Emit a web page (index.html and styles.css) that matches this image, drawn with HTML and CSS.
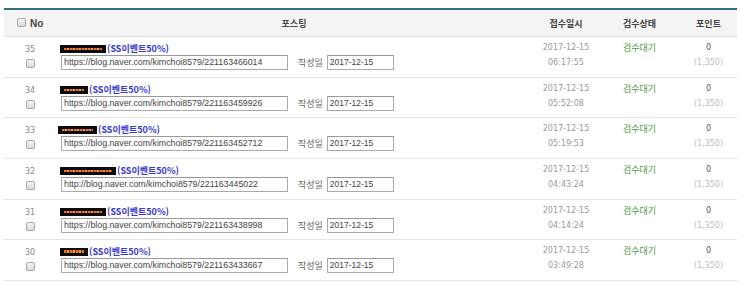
FILE: index.html
```html
<!DOCTYPE html>
<html lang="ko">
<head>
<meta charset="utf-8">
<link rel="stylesheet" href="styles.css">
</head>
<body>
<table class="list">
  <colgroup>
    <col class="c-no"><col class="c-post"><col class="c-date"><col class="c-state"><col class="c-point">
  </colgroup>
  <thead>
    <tr>
      <th class="h-no"><span class="chk chk-h"></span>No</th>
      <th>포스팅</th>
      <th>접수일시</th>
      <th>검수상태</th>
      <th>포인트</th>
    </tr>
  </thead>
  <tbody>
    <tr>
      <td class="no"><div class="num">35</div><span class="chk"></span></td>
      <td class="post">
        <div class="title"><span class="redact" style="width:46px"></span><a class="ev">(SS이벤트50%)</a></div>
        <div class="fields"><span class="inp url">https://blog.naver.com/kimchoi8579/221163466014</span><span class="lbl">작성일</span><span class="inp dt">2017-12-15</span></div>
      </td>
      <td class="date">2017-12-15<br>06:17:55</td>
      <td class="state">검수대기</td>
      <td class="point"><span class="p0">0</span><br><span class="pt">(1,350)</span></td>
    </tr>
    <tr>
      <td class="no"><div class="num">34</div><span class="chk"></span></td>
      <td class="post">
        <div class="title"><span class="redact" style="width:28px"></span><a class="ev">(SS이벤트50%)</a></div>
        <div class="fields"><span class="inp url">https://blog.naver.com/kimchoi8579/221163459926</span><span class="lbl">작성일</span><span class="inp dt">2017-12-15</span></div>
      </td>
      <td class="date">2017-12-15<br>05:52:08</td>
      <td class="state">검수대기</td>
      <td class="point"><span class="p0">0</span><br><span class="pt">(1,350)</span></td>
    </tr>
    <tr>
      <td class="no"><div class="num">33</div><span class="chk"></span></td>
      <td class="post">
        <div class="title"><span class="redact shift" style="width:39px"></span><a class="ev">(SS이벤트50%)</a></div>
        <div class="fields"><span class="inp url">https://blog.naver.com/kimchoi8579/221163452712</span><span class="lbl">작성일</span><span class="inp dt">2017-12-15</span></div>
      </td>
      <td class="date">2017-12-15<br>05:19:53</td>
      <td class="state">검수대기</td>
      <td class="point"><span class="p0">0</span><br><span class="pt">(1,350)</span></td>
    </tr>
    <tr>
      <td class="no"><div class="num">32</div><span class="chk"></span></td>
      <td class="post">
        <div class="title"><span class="redact" style="width:56px"></span><a class="ev">(SS이벤트50%)</a></div>
        <div class="fields"><span class="inp url">http://blog.naver.com/kimchoi8579/221163445022</span><span class="lbl">작성일</span><span class="inp dt">2017-12-15</span></div>
      </td>
      <td class="date">2017-12-15<br>04:43:24</td>
      <td class="state">검수대기</td>
      <td class="point"><span class="p0">0</span><br><span class="pt">(1,350)</span></td>
    </tr>
    <tr>
      <td class="no"><div class="num">31</div><span class="chk"></span></td>
      <td class="post">
        <div class="title"><span class="redact" style="width:46px"></span><a class="ev">(SS이벤트50%)</a></div>
        <div class="fields"><span class="inp url">https://blog.naver.com/kimchoi8579/221163438998</span><span class="lbl">작성일</span><span class="inp dt">2017-12-15</span></div>
      </td>
      <td class="date">2017-12-15<br>04:14:24</td>
      <td class="state">검수대기</td>
      <td class="point"><span class="p0">0</span><br><span class="pt">(1,350)</span></td>
    </tr>
    <tr>
      <td class="no"><div class="num">30</div><span class="chk"></span></td>
      <td class="post">
        <div class="title"><span class="redact thick" style="width:28px"></span><a class="ev">(SS이벤트50%)</a></div>
        <div class="fields"><span class="inp url">https://blog.naver.com/kimchoi8579/221163433667</span><span class="lbl">작성일</span><span class="inp dt">2017-12-15</span></div>
      </td>
      <td class="date">2017-12-15<br>03:49:28</td>
      <td class="state">검수대기</td>
      <td class="point"><span class="p0">0</span><br><span class="pt">(1,350)</span></td>
    </tr>
  </tbody>
</table>
</body>
</html>
```

FILE: styles.css
```css
html, body {
  margin: 0;
  padding: 0;
  background: #fff;
}
body {
  padding: 8px 0 0 4px;
  font-family: "Liberation Sans", "Noto Sans CJK KR", sans-serif;
}
.list {
  width: 733px;
  border-collapse: collapse;
  table-layout: fixed;
  border-top: 2px solid #2e6f86;
}
.c-no { width: 51px; }
.c-post { width: 478px; }
.c-date { width: 66px; }
.c-state { width: 81px; }
.c-point { width: 57px; }

.list th {
  background: #f4f4f4;
  height: 26px;
  padding: 0;
  font-family: "Noto Sans CJK KR", sans-serif;
  font-size: 9px;
  font-weight: bold;
  color: #444;
  text-align: center;
  border-bottom: 1px solid #dedede;
}
.list th.h-no {
  text-align: left;
  padding-left: 13px;
  font-family: "Liberation Sans", sans-serif;
  font-size: 10px;
}
.chk {
  display: inline-block;
  width: 7px;
  height: 7px;
  border: 1px solid #a8a8a8;
  border-radius: 2px;
  background: linear-gradient(#f4f4f4, #dcdcdc);
  vertical-align: middle;
}
.chk-h {
  margin: -2px 4px 0 0;
}
.list tbody tr {
  height: 40.67px;
}
.list td {
  padding: 0;
  vertical-align: top;
  border-bottom: 1px solid #e4e4e4;
  line-height: 12px;
}
td.no {
  text-align: center;
  padding-top: 7px;
  padding-left: 1px;
}
.num {
  font-family: "DejaVu Sans", sans-serif;
  font-size: 8px;
  line-height: 12px;
  color: #888;
}
td.no .chk {
  display: block;
  margin: 3px auto 0;
}
td.post {
  padding: 6px 0 0 5px;
}
.title {
  height: 12px;
  display: flex;
  align-items: center;
}
.redact {
  display: inline-block;
  height: 8px;
  background-color: #0c0c0c;
  background-image: repeating-linear-gradient(90deg, #e8742a 0 2px, #b8461c 2px 3px, #f09a40 3px 5px, #6a2a40 5px 6px);
  background-size: calc(100% - 8px) 2px;
  background-position: 4px 3px;
  background-repeat: no-repeat;
  margin-right: 1px;
}
.redact.shift { margin-left: -2px; }
.redact.thick {
  background-size: calc(100% - 8px) 3px;
  background-position: 4px 2px;
}
.ev {
  font-family: "Noto Sans CJK KR", sans-serif;
  font-size: 9px;
  font-weight: bold;
  color: #3a3ad0;
  line-height: 12px;
}
.fields {
  display: flex;
  align-items: center;
  height: 15px;
}
.inp {
  box-sizing: border-box;
  height: 15px;
  border: 1px solid #aaa;
  border-top-color: #999;
  line-height: 13px;
  padding-left: 2px;
  font-family: "Liberation Sans", sans-serif;
  font-size: 9px;
  color: #444;
  white-space: nowrap;
  overflow: hidden;
}
.url {
  width: 227px;
  margin-left: 1px;
  font-size: 8.8px;
}
.dt {
  width: 67px;
  font-size: 8.5px;
}
.lbl {
  margin: 0 4px 0 10px;
  font-family: "Noto Sans CJK KR", sans-serif;
  font-size: 9px;
  line-height: 13px;
  color: #666;
}
td.date, td.state, td.point {
  text-align: center;
  padding-top: 3px;
  line-height: 15px;
}
td.date {
  font-family: "DejaVu Sans", sans-serif;
  font-size: 8px;
  color: #999;
}
td.state {
  font-family: "Noto Sans CJK KR", sans-serif;
  font-size: 9px;
  color: #4a9a3e;
}
td.point {
  font-family: "DejaVu Sans", sans-serif;
  font-size: 8px;
}
.p0 { color: #555; }
.pt { color: #bdbdbd; }
```
